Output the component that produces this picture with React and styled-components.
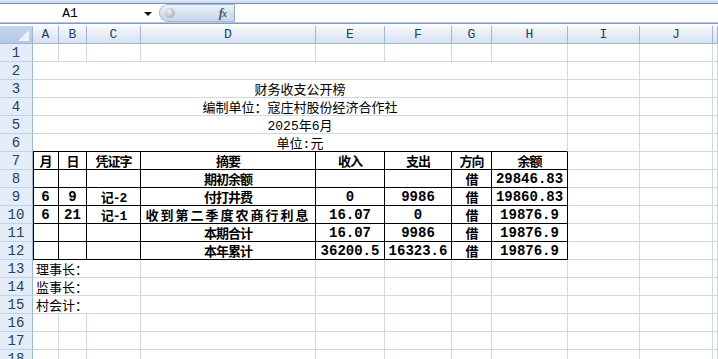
import React from "react";
import styled, { createGlobalStyle } from "styled-components";

const GlobalStyle = createGlobalStyle`
  html, body {
    margin: 0;
    padding: 0;
    background: #ffffff;
    overflow: hidden;
  }
`;

const Page = styled.div`
  width: 718px;
  height: 359px;
  overflow: hidden;
  font-family: "Liberation Mono", "Noto Sans CJK SC", monospace;
  background: #ffffff;
`;

// formula bar

const TopStrip = styled.div`
  height: 3px;
  background: linear-gradient(#e3eaf4, #c9d7ea);
  border-bottom: 1px solid #7391bd;
`;

const FormulaBar = styled.div`
  display: flex;
  height: 18px;
  background: #ffffff;
  border-bottom: 1px solid #b6c8de;
`;

const NameBox = styled.div`
  position: relative;
  width: 158px;
  display: flex;
  align-items: center;
  justify-content: center;
  padding-right: 18px;
  box-sizing: border-box;
  font-size: 13px;
  color: #000;
`;

const DropArrow = styled.span`
  position: absolute;
  right: 6px;
  top: 8px;
  width: 0;
  height: 0;
  border-left: 4px solid transparent;
  border-right: 4px solid transparent;
  border-top: 4px solid #111;
`;

const FxButton = styled.div`
  position: relative;
  width: 76px;
  margin-left: 1px;
  height: 18px;
  box-sizing: border-box;
  border: 1px solid #a4b9d4;
  border-right: 1px solid #8fa8c9;
  border-radius: 9px 0 0 9px;
  background: linear-gradient(#eef3fa, #d6e1ef 55%, #c8d6ea);
  display: flex;
  align-items: center;
  justify-content: flex-end;
  padding-right: 8px;
`;

const Ball = styled.span`
  position: absolute;
  left: 5px;
  top: 3px;
  width: 10px;
  height: 10px;
  border-radius: 50%;
  background: radial-gradient(circle at 40% 35%, #f4f4f4, #b9bcc2 60%, #9ea3ab);
`;

const FxText = styled.span`
  font-family: "Liberation Serif", serif;
  font-style: italic;
  font-weight: bold;
  font-size: 13px;
  color: #4b5668;
  letter-spacing: -1px;
  small {
    font-size: 10px;
  }
`;

const FormulaInput = styled.div`
  flex: 1;
`;

const Gap = styled.div`
  height: 2px;
  border-top: 1px solid #7c9bc6;
  background: #ffffff;
`;

// sheet grid

const Sheet = styled.div`
  display: grid;
  grid-template-columns: 33px 26px 28px 54px 175px 69px 67px 40px 76px 72px 73px 1fr;
  grid-auto-rows: 18px;
`;

const Corner = styled.div`
  position: relative;
  box-sizing: border-box;
  background: linear-gradient(#c6d7ee, #b1c8e6);
  border-right: 1px solid #9eb6ce;
  border-bottom: 1px solid #9eb6ce;
  &::after {
    content: "";
    position: absolute;
    right: 3px;
    bottom: 2px;
    width: 0;
    height: 0;
    border-left: 11px solid transparent;
    border-bottom: 11px solid #eef3f9;
  }
`;

const ColHead = styled.div`
  box-sizing: border-box;
  background: linear-gradient(#f8fafd, #e4ebf5 55%, #d7e1ee);
  border-right: 1px solid #9eb6ce;
  border-bottom: 1px solid #9eb6ce;
  display: flex;
  align-items: center;
  justify-content: center;
  font-size: 13px;
  color: #22405f;
`;

const RowHead = styled.div`
  box-sizing: border-box;
  background: #e4ecf7;
  border-right: 1px solid #9eb6ce;
  border-bottom: 1px solid #c3d1e4;
  display: flex;
  align-items: center;
  justify-content: center;
  font-size: 14px;
  color: #22405f;
`;

const Cell = styled.div`
  grid-column: span ${(p) => p.$span || 1};
  box-sizing: border-box;
  min-width: 0;
  border-right: 1px solid ${(p) => (p.$box ? "#000" : "#d0d7e5")};
  border-bottom: 1px solid ${(p) => (p.$box || p.$boxBottom ? "#000" : "#d0d7e5")};
  box-shadow: ${(p) => (p.$boxLeft ? "inset 1px 0 0 #000" : "none")};
  display: flex;
  align-items: center;
  justify-content: ${(p) => (p.$left ? "flex-start" : "center")};
  padding-left: ${(p) => (p.$left ? "3px" : "0")};
  white-space: nowrap;
  overflow: visible;
  font-size: ${(p) => p.$size || 13}px;
  font-weight: ${(p) => (p.$bold ? 700 : 400)};
  letter-spacing: ${(p) => p.$spacing || 0}px;
  color: #000;
`;

const letters = ["A", "B", "C", "D", "E", "F", "G", "H", "I", "J", ""];

const titles = [
  null,
  "",
  "财务收支公开榜",
  "编制单位：寇庄村股份经济合作社",
  "2025年6月",
  "单位:元",
];

const table = [
  ["月", "日", "凭证字", "摘要", "收入", "支出", "方向", "余额"],
  ["", "", "", "期初余额", "", "", "借", "29846.83"],
  ["6", "9", "记-2", "付打井费", "0", "9986", "借", "19860.83"],
  ["6", "21", "记-1", "收到第二季度农商行利息", "16.07", "0", "借", "19876.9"],
  ["", "", "", "本期合计", "16.07", "9986", "借", "19876.9"],
  ["", "", "", "本年累计", "36200.5", "16323.6", "借", "19876.9"],
];

const signers = ["理事长：", "监事长：", "村会计："];

const isNumber = (v) => /^[0-9.]+$/.test(v);

// letter spacing for bold cell text: numbers plain, long CJK text wide
const spacingFor = (v) => (isNumber(v) ? 0 : v.length > 8 ? 2 : -1);

const Tail = ({ from }) =>
  Array.from({ length: 11 - from }).map((_, i) => <Cell key={`t${i}`} />);

export default function App() {
  const rows = [];

  // row 1: plain grid
  rows.push(
    <React.Fragment key="r1">
      <RowHead>1</RowHead>
      <Tail from={0} />
    </React.Fragment>
  );

  // rows 2-6: merged title rows A..H
  for (let r = 2; r <= 6; r++) {
    rows.push(
      <React.Fragment key={`r${r}`}>
        <RowHead>{r}</RowHead>
        <Cell $span={8} $boxBottom={r === 6}>
          {titles[r - 1]}
        </Cell>
        <Tail from={8} />
      </React.Fragment>
    );
  }

  // rows 7-12: bordered table
  table.forEach((line, i) => {
    const r = i + 7;
    rows.push(
      <React.Fragment key={`r${r}`}>
        <RowHead>{r}</RowHead>
        {line.map((v, c) => (
          <Cell
            key={c}
            $box
            $boxLeft={c === 0}
            $bold
            $size={isNumber(v) ? 14 : 13}
            $spacing={spacingFor(v)}
          >
            {v}
          </Cell>
        ))}
        <Tail from={8} />
      </React.Fragment>
    );
  });

  // rows 13-15: signatures overflowing A..C
  signers.forEach((s, i) => {
    const r = i + 13;
    rows.push(
      <React.Fragment key={`r${r}`}>
        <RowHead>{r}</RowHead>
        <Cell $span={3} $left>
          {s}
        </Cell>
        <Tail from={3} />
      </React.Fragment>
    );
  });

  for (let r = 16; r <= 19; r++) {
    rows.push(
      <React.Fragment key={`r${r}`}>
        <RowHead>{r}</RowHead>
        <Tail from={0} />
      </React.Fragment>
    );
  }

  return (
    <Page>
      <GlobalStyle />
      <TopStrip />
      <FormulaBar>
        <NameBox>
          A1
          <DropArrow />
        </NameBox>
        <FxButton>
          <Ball />
          <FxText>
            f<small>x</small>
          </FxText>
        </FxButton>
        <FormulaInput />
      </FormulaBar>
      <Gap />
      <Sheet>
        <Corner />
        {letters.map((l, i) => (
          <ColHead key={i}>{l}</ColHead>
        ))}
        {rows}
      </Sheet>
    </Page>
  );
}
